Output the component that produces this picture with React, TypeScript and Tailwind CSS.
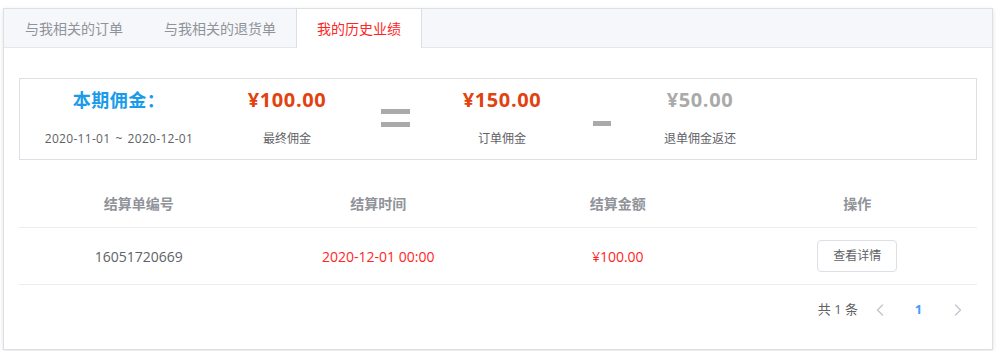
import { ChevronLeft, ChevronRight } from "lucide-react";

const tabs = ["与我相关的订单", "与我相关的退货单", "我的历史业绩"];

function Amount({ value, label, grey }: { value: string; label: string; grey?: boolean }) {
  return (
    <div className="flex flex-col items-center">
      <div
        className={`text-[20px] font-bold leading-[28px] tracking-[0.6px] ${grey ? "text-[#aaaaaa]" : "text-[#e2420f]"}`}
      >
        {value}
      </div>
      <div className="mt-[17px] text-[12px] leading-[16px] text-[#606266]">{label}</div>
    </div>
  );
}

export default function App() {
  return (
    <div className="min-h-[351px] bg-white pt-[8px] pl-[3px] font-['Open_Sans','Noto_Sans_CJK_SC',sans-serif]">
      <div className="box-border h-[342px] w-[990px] border border-[#dcdfe6] bg-white shadow-[0_2px_4px_rgba(0,0,0,0.08),0_0_6px_rgba(0,0,0,0.04)]">
        {/* tab header */}
        <div className="box-border flex h-[39px] border-b border-[#e4e7ed] bg-[#f5f7fa]">
          {tabs.map((t, i) => (
            <div
              key={t}
              className={`box-border flex h-[39px] items-center border-x px-5 text-[14px] ${
                i > 0 ? "-ml-px" : ""
              } ${
                i === 2
                  ? "border-[#dcdfe6] bg-white text-[#ff2525]"
                  : "border-transparent text-[#909399]"
              }`}
            >
              {t}
            </div>
          ))}
        </div>

        <div className="px-[15px] pt-[30px]">
          {/* summary box */}
          <div className="box-border flex h-[82px] border border-[#dcdfe6] pt-[7px]">
            <div className="flex w-[198px] flex-col items-center">
              <div className="text-[18px] font-bold leading-[28px] tracking-[0.5px] text-[#1a9bea]">本期佣金：</div>
              <div className="mt-[17px] flex text-[12px] leading-[16px] tracking-[0.3px] text-[#606266]">
                <span>2020-11-01</span>
                <span className="mx-[5px]">~</span>
                <span>2020-12-01</span>
              </div>
            </div>
            <div className="w-[138px]">
              <Amount value="¥100.00" label="最终佣金" />
            </div>
            <div className="flex w-[78px] justify-center pt-[23px]">
              <div className="flex flex-col gap-[8px]">
                <div className="h-[5px] w-[29px] bg-[#aaaaaa]" />
                <div className="h-[5px] w-[29px] bg-[#aaaaaa]" />
              </div>
            </div>
            <div className="w-[136px]">
              <Amount value="¥150.00" label="订单佣金" />
            </div>
            <div className="flex w-[64px] justify-center pt-[35px]">
              <div className="h-[5px] w-[18px] bg-[#aaaaaa]" />
            </div>
            <div className="w-[132px]">
              <Amount value="¥50.00" label="退单佣金返还" grey />
            </div>
          </div>

          {/* table */}
          <div className="mt-[19px]">
            <div className="box-border grid h-[49px] grid-cols-4 items-center border-b border-[#ebeef5] text-center text-[14px] font-bold text-[#909399]">
              <div>结算单编号</div>
              <div>结算时间</div>
              <div>结算金额</div>
              <div>操作</div>
            </div>
            <div className="box-border grid h-[57px] grid-cols-4 items-center border-b border-[#ebeef5] text-center text-[14px]">
              <div className="text-[#606266]">16051720669</div>
              <div className="text-[#ff2525]">2020-12-01 00:00</div>
              <div className="text-[#ff2525]">¥100.00</div>
              <div className="flex justify-center">
                <button className="box-border h-[32px] rounded-[4px] border border-[#dcdfe6] bg-white px-[15px] text-[12px] text-[#606266]">
                  查看详情
                </button>
              </div>
            </div>
          </div>

          {/* pagination */}
          <div className="mt-[11px] flex h-[28px] items-center justify-end text-[13px]">
            <span className="mr-[2px] text-[#606266]">共 1 条</span>
            <div className="flex w-[39px] justify-center text-[#c0c4cc]">
              <ChevronLeft size={20} strokeWidth={1.5} />
            </div>
            <div className="flex w-[39px] justify-center font-bold text-[#409eff]">1</div>
            <div className="flex w-[39px] justify-center text-[#c0c4cc]">
              <ChevronRight size={20} strokeWidth={1.5} />
            </div>
          </div>
        </div>
      </div>
    </div>
  );
}
